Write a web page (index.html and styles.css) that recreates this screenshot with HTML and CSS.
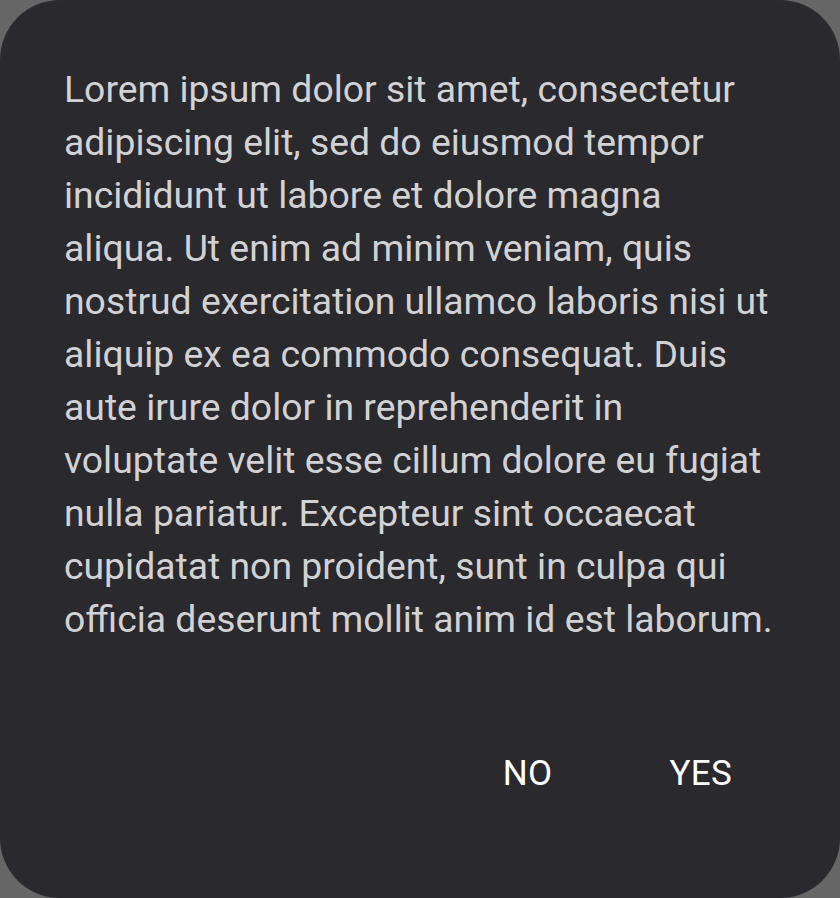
FILE: index.html
```html
<!DOCTYPE html>
<html>
<head>
<meta charset="utf-8">
<link rel="stylesheet" href="styles.css">
</head>
<body>
<div class="dialog">
  <p class="message">Lorem ipsum dolor sit amet, consectetur adipiscing elit, sed do eiusmod tempor incididunt ut labore et dolore magna aliqua. Ut enim ad minim veniam, quis nostrud exercitation ullamco laboris nisi ut aliquip ex ea commodo consequat. Duis aute irure dolor in reprehenderit in voluptate velit esse cillum dolore eu fugiat nulla pariatur. Excepteur sint occaecat cupidatat non proident, sunt in culpa qui officia deserunt mollit anim id est laborum.</p>
  <div class="actions">
    <button class="btn">NO</button>
    <button class="btn">YES</button>
  </div>
</div>
</body>
</html>
```
FILE: styles.css
```css
html, body {
  margin: 0;
  padding: 0;
  background: #666666;
}
.dialog {
  box-sizing: border-box;
  width: 840px;
  height: 898px;
  background: #2a292e;
  border-radius: 60px;
  padding: 63px 64px 0 64px;
  display: flex;
  flex-direction: column;
  font-family: Roboto, sans-serif;
}
.message {
  margin: 0;
  color: #d2d2d4;
  font-size: 37.33px;
  line-height: 53.05px;
  width: 712px;
}
.actions {
  display: flex;
  justify-content: flex-end;
  margin-top: 100px;
  padding-right: 44px;
}
.btn {
  background: none;
  border: none;
  color: #ffffff;
  font-family: Roboto, sans-serif;
  font-size: 35px;
  letter-spacing: 0.3px;
  line-height: 53px;
  padding: 0;
  margin-left: 117px;
}
```
